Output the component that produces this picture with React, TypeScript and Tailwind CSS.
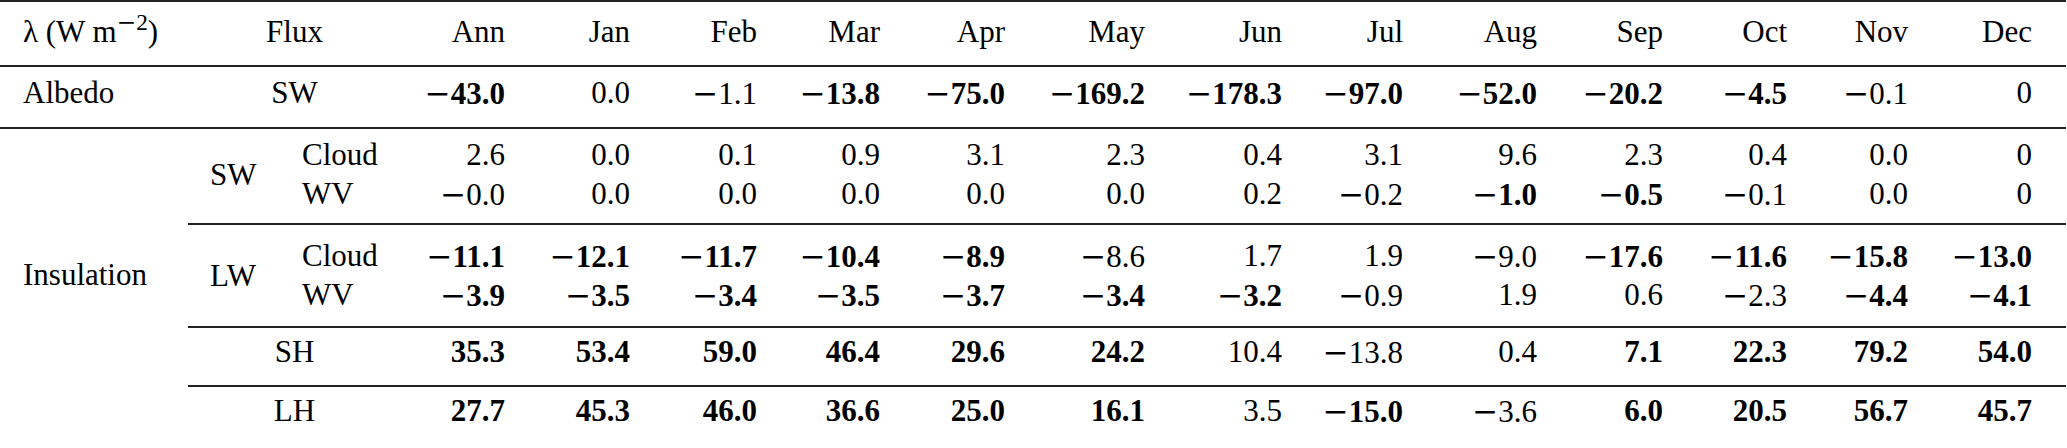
import React from "react";

// table of flux feedback values, one string per cell: "*" = bold, "-" = minus
const data = {
  albedo: ["*-43.0", "0.0", "-1.1", "*-13.8", "*-75.0", "*-169.2", "*-178.3", "*-97.0", "*-52.0", "*-20.2", "*-4.5", "-0.1", "0"],
  swCloud: ["2.6", "0.0", "0.1", "0.9", "3.1", "2.3", "0.4", "3.1", "9.6", "2.3", "0.4", "0.0", "0"],
  swWv: ["-0.0", "0.0", "0.0", "0.0", "0.0", "0.0", "0.2", "-0.2", "*-1.0", "*-0.5", "-0.1", "0.0", "0"],
  lwCloud: ["*-11.1", "*-12.1", "*-11.7", "*-10.4", "*-8.9", "-8.6", "1.7", "1.9", "-9.0", "*-17.6", "*-11.6", "*-15.8", "*-13.0"],
  lwWv: ["*-3.9", "*-3.5", "*-3.4", "*-3.5", "*-3.7", "*-3.4", "*-3.2", "-0.9", "1.9", "0.6", "-2.3", "*-4.4", "*-4.1"],
  sh: ["*35.3", "*53.4", "*59.0", "*46.4", "*29.6", "*24.2", "10.4", "-13.8", "0.4", "*7.1", "*22.3", "*79.2", "*54.0"],
  lh: ["*27.7", "*45.3", "*46.0", "*36.6", "*25.0", "*16.1", "3.5", "*-15.0", "-3.6", "*6.0", "*20.5", "*56.7", "*45.7"],
};

const months = ["Ann", "Jan", "Feb", "Mar", "Apr", "May", "Jun", "Jul", "Aug", "Sep", "Oct", "Nov", "Dec"];

const colWidths = [
  "w-[188px]", "w-[90px]", "w-[123px]",
  "w-[127px]", "w-[125px]", "w-[127px]", "w-[123px]", "w-[125px]", "w-[140px]", "w-[137px]",
  "w-[121px]", "w-[134px]", "w-[126px]", "w-[124px]", "w-[121px]", "w-[135px]",
];

const r1 = "border-t-2 border-[#222] pt-[11px] pb-[14px] align-top";
const r2 = "border-t-2 border-[#222] pt-[7px] pb-[14px] align-top";
const r3 = "border-t-2 border-[#222] pt-[7px] pb-[1px] align-top";
const r4 = "pt-0 pb-[9px] align-top";
const r5 = "border-t-2 border-[#222] pt-[12px] pb-0 align-top";
const r6 = "pt-0 pb-[11px] align-top";
const r7 = "border-t-2 border-[#222] pt-[4.5px] pb-[13.5px] align-top";
const r8 = "border-t-2 border-b-2 border-[#222] pt-[5px] pb-[19px] align-top";

function Minus() {
  return <span className="font-['DejaVu_Serif'] font-normal">−</span>;
}

function Num({ s }: { s: string }) {
  const bold = s.startsWith("*");
  let t = bold ? s.slice(1) : s;
  const neg = t.startsWith("-");
  if (neg) t = t.slice(1);
  return (
    <>
      {neg && <Minus />}
      <span className={bold ? "font-bold" : ""}>{t}</span>
    </>
  );
}

function Vals({ vals, cls }: { vals: string[]; cls: string }) {
  return (
    <>
      {vals.map((v, i) => (
        <td key={i} className={`${cls} text-right ${i === vals.length - 1 ? "pr-[34px]" : "pr-[23px]"}`}>
          <Num s={v} />
        </td>
      ))}
    </>
  );
}

export default function App() {
  return (
    <div className="w-[2067px] h-[448px] bg-white">
      <table className="table-fixed border-separate border-spacing-0 w-[2066px] font-['Liberation_Serif',serif] text-[31px] leading-[38px] text-black whitespace-nowrap">
        <colgroup>
          {colWidths.map((w, i) => (
            <col key={i} className={w} />
          ))}
        </colgroup>
        <tbody>
          <tr>
            <td className={`${r1} pl-[23px] text-left`}>
              λ (W m<sup><Minus />2</sup>)
            </td>
            <td colSpan={2} className={`${r1} text-center`}>Flux</td>
            {months.map((m, i) => (
              <td key={m} className={`${r1} text-right ${i === months.length - 1 ? "pr-[34px]" : "pr-[23px]"}`}>
                {m}
              </td>
            ))}
          </tr>

          <tr>
            <td className={`${r2} pl-[23px]`}>Albedo</td>
            <td colSpan={2} className={`${r2} text-center`}>SW</td>
            <Vals vals={data.albedo} cls={r2} />
          </tr>

          <tr>
            <td rowSpan={6} className="border-t-2 border-b-2 border-[#222] pl-[23px] pt-[126.5px] align-top">
              Insulation
            </td>
            <td rowSpan={2} className="border-t-2 border-[#222] pl-[22px] pt-[26.5px] align-top">SW</td>
            <td className={`${r3} pl-[24px]`}>Cloud</td>
            <Vals vals={data.swCloud} cls={r3} />
          </tr>
          <tr>
            <td className={`${r4} pl-[24px]`}>WV</td>
            <Vals vals={data.swWv} cls={r4} />
          </tr>

          <tr>
            <td rowSpan={2} className="border-t-2 border-[#222] pl-[22px] pt-[31.5px] align-top">LW</td>
            <td className={`${r5} pl-[24px]`}>Cloud</td>
            <Vals vals={data.lwCloud} cls={r5} />
          </tr>
          <tr>
            <td className={`${r6} pl-[24px]`}>WV</td>
            <Vals vals={data.lwWv} cls={r6} />
          </tr>

          <tr>
            <td colSpan={2} className={`${r7} text-center`}>SH</td>
            <Vals vals={data.sh} cls={r7} />
          </tr>
          <tr>
            <td colSpan={2} className={`${r8} text-center`}>LH</td>
            <Vals vals={data.lh} cls={r8} />
          </tr>
        </tbody>
      </table>
    </div>
  );
}
